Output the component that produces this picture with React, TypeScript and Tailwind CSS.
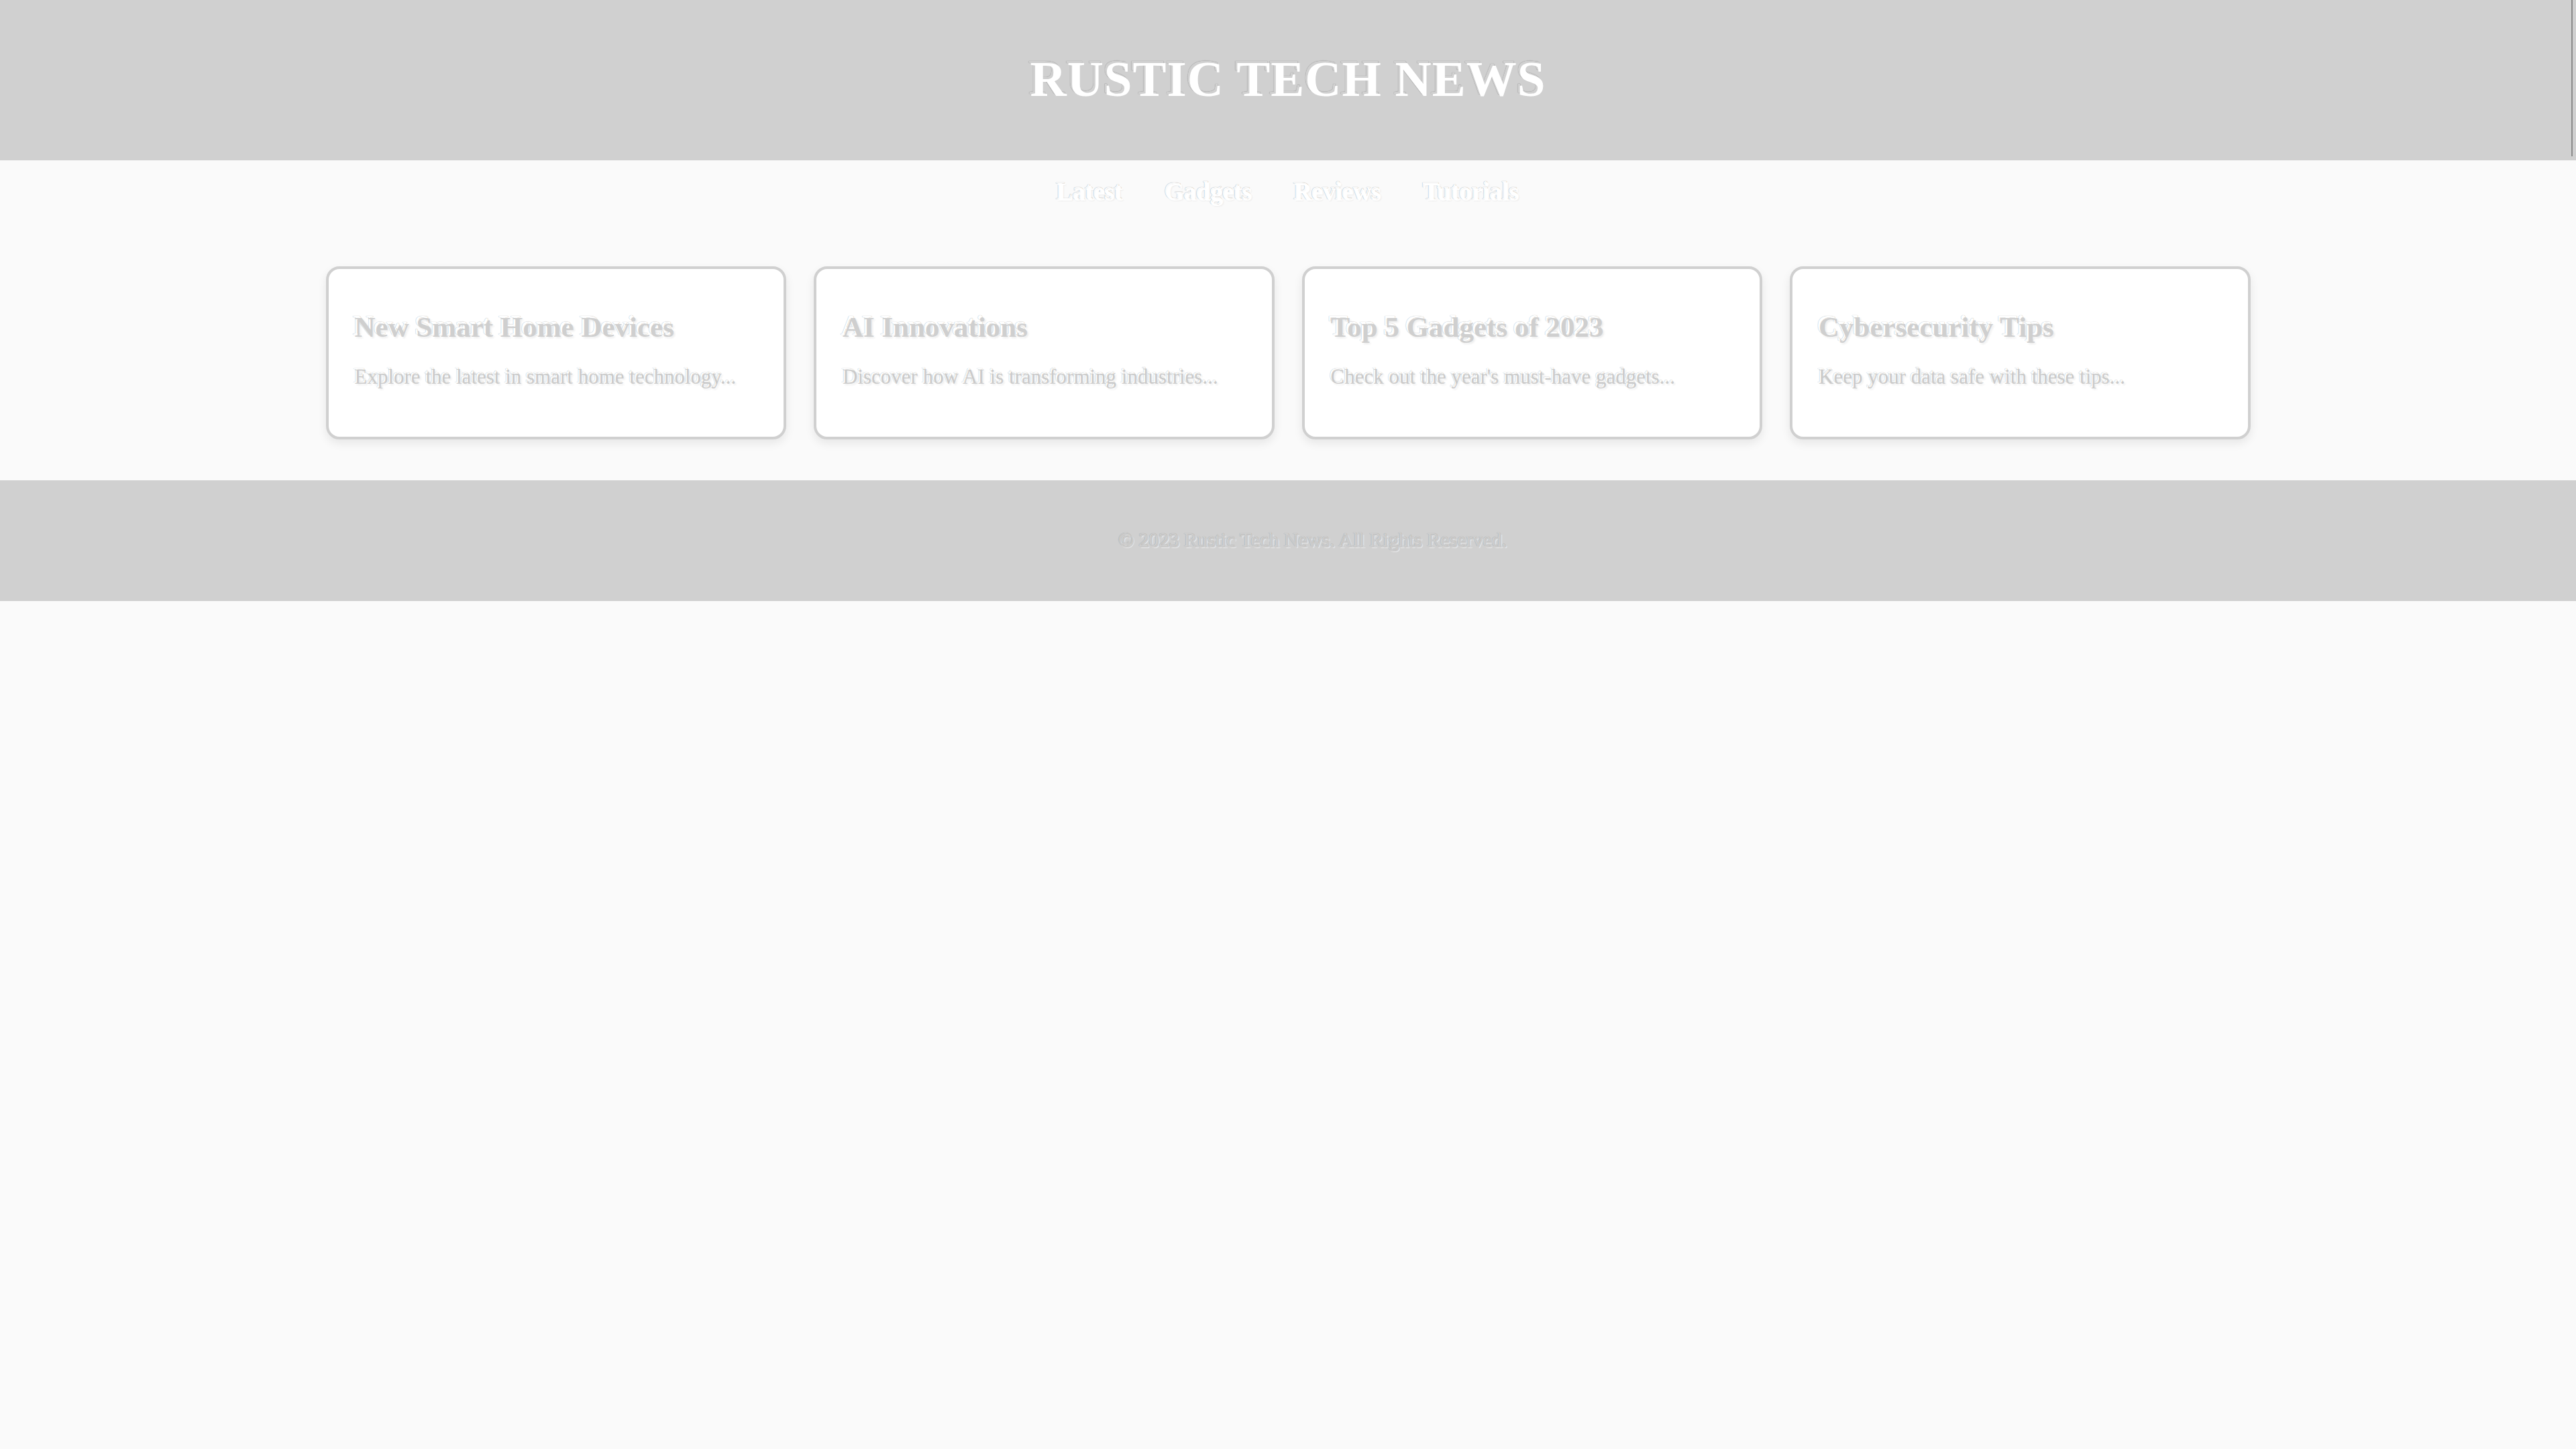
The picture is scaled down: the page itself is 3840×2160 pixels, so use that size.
import React from "react";

const cards = [
  { title: "New Smart Home Devices", text: "Explore the latest in smart home technology..." },
  { title: "AI Innovations", text: "Discover how AI is transforming industries..." },
  { title: "Top 5 Gadgets of 2023", text: "Check out the year's must-have gadgets..." },
  { title: "Cybersecurity Tips", text: "Keep your data safe with these tips..." },
];

const navItems = ["Latest", "Gadgets", "Reviews", "Tutorials"];

export default function App() {
  return (
    <div className="min-h-screen bg-[#fafafa] font-['Liberation_Serif',serif]">
      <header className="relative h-[239px] bg-[#d0d0d0] flex items-center justify-center">
        <h1 className="text-[75px] leading-none font-bold text-white tracking-[1px] -mt-[4px] [text-shadow:-3px_-3px_0_#d0d0d0,-3px_-3px_1px_rgba(0,0,0,0.45)]">
          RUSTIC TECH NEWS
        </h1>
        <div className="absolute right-[5px] top-0 h-[233px] w-[2px] bg-[#8a8a8a]" />
      </header>

      <nav className="h-[96px] flex items-center justify-center gap-[63px] pb-[2px]">
        {navItems.map((item) => (
          <a
            key={item}
            href="#"
            className="text-[37px] leading-none font-bold text-white [text-shadow:-2px_-2px_0_#fafafa,-2px_-2px_1px_rgba(0,0,0,0.45),1px_1px_2px_rgba(0,0,0,0.06)]"
          >
            {item}
          </a>
        ))}
      </nav>

      <main className="pt-[62px] pb-[61px]">
        <div className="w-[2869px] mx-auto grid grid-cols-4 gap-[41px]">
          {cards.map((c) => (
            <div
              key={c.title}
              className="h-[258px] bg-white border-[4px] border-[#d0d0d0] rounded-[20px] shadow-[0_6px_14px_rgba(0,0,0,0.08)] pl-[39px] pr-[40px] pt-[61px]"
            >
              <h2 className="text-[43px] leading-[1.2] font-bold text-[#cfcfcf] [text-shadow:-3px_-3px_0_#ffffff,-3px_-3px_1px_rgba(0,0,0,0.4),2px_2px_3px_rgba(0,0,0,0.08)]">
                {c.title}
              </h2>
              <p className="mt-[25px] text-[31px] leading-[1.5] text-[#cacaca] [text-shadow:-2px_-2px_0_#ffffff,-2px_-2px_1px_rgba(0,0,0,0.4),2px_2px_3px_rgba(0,0,0,0.08)]">
                {c.text}
              </p>
            </div>
          ))}
        </div>
      </main>

      <footer className="h-[180px] bg-[#d0d0d0] flex items-center justify-center">
        <p className="pl-[76px] text-[30px] leading-none text-[#cacaca] [text-shadow:-2px_-2px_0_#d0d0d0,-2px_-2px_1px_rgba(0,0,0,0.3),1px_1px_1px_rgba(255,255,255,0.6)]">
          © 2023 Rustic Tech News. All Rights Reserved.
        </p>
      </footer>
    </div>
  );
}
